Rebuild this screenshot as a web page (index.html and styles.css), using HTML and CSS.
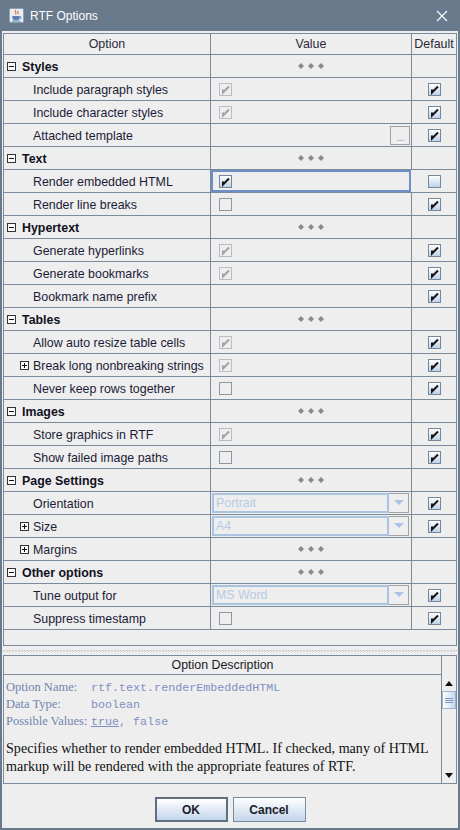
FILE: index.html
```html
<!DOCTYPE html>
<html>
<head>
<meta charset="utf-8">
<link rel="stylesheet" href="styles.css">
</head>
<body>
<div class="window">
  <div class="titlebar">
    <svg class="app-icon" width="15" height="15" viewBox="0 0 16 16">
      <rect x="0.5" y="0.5" width="15" height="15" rx="1.5" fill="#e9eef4" stroke="#8aa0b8"/>
      <path d="M7 2 C5 4 9 5 7 7 M9.5 3 C8 4.5 11 5 9.5 6.5" fill="none" stroke="#e0702a" stroke-width="1.2"/>
      <path d="M3.5 8.5 H11.5 V10.5 C11.5 12 10 13 8.5 13 H6.5 C5 13 3.5 12 3.5 10.5 Z" fill="#5a7fb0"/>
      <path d="M11.5 9 C13.5 9 13.5 11.5 11.5 11.5" fill="none" stroke="#5a7fb0" stroke-width="1"/>
      <path d="M3 14 H12.5" stroke="#5a7fb0" stroke-width="1"/>
    </svg>
    <span class="title">RTF Options</span>
    <svg class="close" width="12" height="12" viewBox="0 0 12 12">
      <path d="M1 1 L11 11 M11 1 L1 11" stroke="#ffffff" stroke-width="1.2" fill="none"/>
    </svg>
  </div>
  <div class="content">
    <div class="table-pane">
      <div class="row header">
        <div class="cell center">Option</div>
        <div class="cell center">Value</div>
        <div class="cell center">Default</div>
      </div>

      <div class="row group">
        <div class="cell opt"><span class="tog minus"></span><b>Styles</b></div>
        <div class="cell center"><span class="dots"><i></i><i></i><i></i></span></div>
        <div class="cell"></div>
      </div>
      <div class="row">
        <div class="cell opt child">Include paragraph styles</div>
        <div class="cell val"><span class="cb dis"><svg viewBox="0 0 11 11"><path d="M3 5.5 V8.5 L9 2.5"/></svg></span></div>
        <div class="cell center"><span class="cb"><svg viewBox="0 0 11 11"><path d="M3 5.5 V8.5 L9 2.5"/></svg></span></div>
      </div>
      <div class="row">
        <div class="cell opt child">Include character styles</div>
        <div class="cell val"><span class="cb dis"><svg viewBox="0 0 11 11"><path d="M3 5.5 V8.5 L9 2.5"/></svg></span></div>
        <div class="cell center"><span class="cb"><svg viewBox="0 0 11 11"><path d="M3 5.5 V8.5 L9 2.5"/></svg></span></div>
      </div>
      <div class="row">
        <div class="cell opt child">Attached template</div>
        <div class="cell val end"><span class="browse">...</span></div>
        <div class="cell center"><span class="cb"><svg viewBox="0 0 11 11"><path d="M3 5.5 V8.5 L9 2.5"/></svg></span></div>
      </div>

      <div class="row group">
        <div class="cell opt"><span class="tog minus"></span><b>Text</b></div>
        <div class="cell center"><span class="dots"><i></i><i></i><i></i></span></div>
        <div class="cell"></div>
      </div>
      <div class="row">
        <div class="cell opt child">Render embedded HTML</div>
        <div class="cell val focus"><span class="cb"><svg viewBox="0 0 11 11"><path d="M3 5.5 V8.5 L9 2.5"/></svg></span></div>
        <div class="cell center"><span class="cb"></span></div>
      </div>
      <div class="row">
        <div class="cell opt child">Render line breaks</div>
        <div class="cell val"><span class="cb plain"></span></div>
        <div class="cell center"><span class="cb"><svg viewBox="0 0 11 11"><path d="M3 5.5 V8.5 L9 2.5"/></svg></span></div>
      </div>

      <div class="row group">
        <div class="cell opt"><span class="tog minus"></span><b>Hypertext</b></div>
        <div class="cell center"><span class="dots"><i></i><i></i><i></i></span></div>
        <div class="cell"></div>
      </div>
      <div class="row">
        <div class="cell opt child">Generate hyperlinks</div>
        <div class="cell val"><span class="cb dis"><svg viewBox="0 0 11 11"><path d="M3 5.5 V8.5 L9 2.5"/></svg></span></div>
        <div class="cell center"><span class="cb"><svg viewBox="0 0 11 11"><path d="M3 5.5 V8.5 L9 2.5"/></svg></span></div>
      </div>
      <div class="row">
        <div class="cell opt child">Generate bookmarks</div>
        <div class="cell val"><span class="cb dis"><svg viewBox="0 0 11 11"><path d="M3 5.5 V8.5 L9 2.5"/></svg></span></div>
        <div class="cell center"><span class="cb"><svg viewBox="0 0 11 11"><path d="M3 5.5 V8.5 L9 2.5"/></svg></span></div>
      </div>
      <div class="row">
        <div class="cell opt child">Bookmark name prefix</div>
        <div class="cell val"></div>
        <div class="cell center"><span class="cb"><svg viewBox="0 0 11 11"><path d="M3 5.5 V8.5 L9 2.5"/></svg></span></div>
      </div>

      <div class="row group">
        <div class="cell opt"><span class="tog minus"></span><b>Tables</b></div>
        <div class="cell center"><span class="dots"><i></i><i></i><i></i></span></div>
        <div class="cell"></div>
      </div>
      <div class="row">
        <div class="cell opt child">Allow auto resize table cells</div>
        <div class="cell val"><span class="cb dis"><svg viewBox="0 0 11 11"><path d="M3 5.5 V8.5 L9 2.5"/></svg></span></div>
        <div class="cell center"><span class="cb"><svg viewBox="0 0 11 11"><path d="M3 5.5 V8.5 L9 2.5"/></svg></span></div>
      </div>
      <div class="row">
        <div class="cell opt sub"><span class="tog plus"></span>Break long nonbreaking strings</div>
        <div class="cell val"><span class="cb dis"><svg viewBox="0 0 11 11"><path d="M3 5.5 V8.5 L9 2.5"/></svg></span></div>
        <div class="cell center"><span class="cb"><svg viewBox="0 0 11 11"><path d="M3 5.5 V8.5 L9 2.5"/></svg></span></div>
      </div>
      <div class="row">
        <div class="cell opt child">Never keep rows together</div>
        <div class="cell val"><span class="cb plain"></span></div>
        <div class="cell center"><span class="cb"><svg viewBox="0 0 11 11"><path d="M3 5.5 V8.5 L9 2.5"/></svg></span></div>
      </div>

      <div class="row group">
        <div class="cell opt"><span class="tog minus"></span><b>Images</b></div>
        <div class="cell center"><span class="dots"><i></i><i></i><i></i></span></div>
        <div class="cell"></div>
      </div>
      <div class="row">
        <div class="cell opt child">Store graphics in RTF</div>
        <div class="cell val"><span class="cb dis"><svg viewBox="0 0 11 11"><path d="M3 5.5 V8.5 L9 2.5"/></svg></span></div>
        <div class="cell center"><span class="cb"><svg viewBox="0 0 11 11"><path d="M3 5.5 V8.5 L9 2.5"/></svg></span></div>
      </div>
      <div class="row">
        <div class="cell opt child">Show failed image paths</div>
        <div class="cell val"><span class="cb plain"></span></div>
        <div class="cell center"><span class="cb"><svg viewBox="0 0 11 11"><path d="M3 5.5 V8.5 L9 2.5"/></svg></span></div>
      </div>

      <div class="row group">
        <div class="cell opt"><span class="tog minus"></span><b>Page Settings</b></div>
        <div class="cell center"><span class="dots"><i></i><i></i><i></i></span></div>
        <div class="cell"></div>
      </div>
      <div class="row">
        <div class="cell opt child">Orientation</div>
        <div class="cell combo-cell"><div class="combo"><span class="combo-text">Portrait</span><span class="combo-btn"><svg width="10" height="6" viewBox="0 0 10 6"><path d="M0 0 H10 L5 5 Z" fill="#a9c4e2"/></svg></span></div></div>
        <div class="cell center"><span class="cb"><svg viewBox="0 0 11 11"><path d="M3 5.5 V8.5 L9 2.5"/></svg></span></div>
      </div>
      <div class="row">
        <div class="cell opt sub"><span class="tog plus"></span>Size</div>
        <div class="cell combo-cell"><div class="combo"><span class="combo-text">A4</span><span class="combo-btn"><svg width="10" height="6" viewBox="0 0 10 6"><path d="M0 0 H10 L5 5 Z" fill="#a9c4e2"/></svg></span></div></div>
        <div class="cell center"><span class="cb"><svg viewBox="0 0 11 11"><path d="M3 5.5 V8.5 L9 2.5"/></svg></span></div>
      </div>
      <div class="row">
        <div class="cell opt sub"><span class="tog plus"></span>Margins</div>
        <div class="cell center"><span class="dots"><i></i><i></i><i></i></span></div>
        <div class="cell"></div>
      </div>

      <div class="row group">
        <div class="cell opt"><span class="tog minus"></span><b>Other options</b></div>
        <div class="cell center"><span class="dots"><i></i><i></i><i></i></span></div>
        <div class="cell"></div>
      </div>
      <div class="row">
        <div class="cell opt child">Tune output for</div>
        <div class="cell combo-cell"><div class="combo"><span class="combo-text">MS Word</span><span class="combo-btn"><svg width="10" height="6" viewBox="0 0 10 6"><path d="M0 0 H10 L5 5 Z" fill="#a9c4e2"/></svg></span></div></div>
        <div class="cell center"><span class="cb"><svg viewBox="0 0 11 11"><path d="M3 5.5 V8.5 L9 2.5"/></svg></span></div>
      </div>
      <div class="row">
        <div class="cell opt child">Suppress timestamp</div>
        <div class="cell val"><span class="cb plain"></span></div>
        <div class="cell center"><span class="cb"><svg viewBox="0 0 11 11"><path d="M3 5.5 V8.5 L9 2.5"/></svg></span></div>
      </div>
    </div>

    <div class="splitter"><div class="grip"></div></div>

    <div class="desc-pane">
      <div class="desc-main">
        <div class="desc-header">Option Description</div>
        <div class="desc-body">
          <div class="props">
            <span class="lbl">Option Name:</span><span class="v">rtf.text.renderEmbeddedHTML</span>
            <span class="lbl">Data Type:</span><span class="v">boolean</span>
            <span class="lbl">Possible Values:</span><span class="v"><u>true</u>, false</span>
          </div>
          <p class="para">Specifies whether to render embedded HTML. If checked, many of HTML markup will be rendered with the appropriate features of RTF.</p>
        </div>
      </div>
      <div class="scrollbar">
        <div class="sb-corner"></div>
        <div class="sb-btn"><svg width="8" height="5" viewBox="0 0 8 5"><path d="M0 5 H8 L4 0 Z" fill="#111"/></svg></div>
        <div class="sb-track"><div class="sb-thumb"><span></span><span></span><span></span></div></div>
        <div class="sb-btn"><svg width="8" height="5" viewBox="0 0 8 5"><path d="M0 0 H8 L4 5 Z" fill="#111"/></svg></div>
      </div>
    </div>

    <div class="buttons">
      <button class="btn default">OK</button>
      <button class="btn">Cancel</button>
    </div>
  </div>
</div>
</body>
</html>
```
FILE: styles.css
```css
html, body {
  margin: 0;
  padding: 0;
}
body {
  width: 460px;
  height: 830px;
  font-family: "Liberation Sans", Arial, sans-serif;
  font-size: 12.4px;
  color: #1c1c38;
}
.window {
  width: 460px;
  height: 830px;
  box-sizing: border-box;
  background: #687a8c;
  padding: 0 2px 2px 2px;
  display: flex;
  flex-direction: column;
}
.titlebar {
  height: 31px;
  flex: none;
  display: flex;
  align-items: center;
  padding-left: 7px;
  padding-right: 8px;
}
.app-icon {
  flex: none;
}
.title {
  color: #ffffff;
  font-family: "Liberation Sans", Arial, sans-serif;
  font-size: 12px;
  margin-left: 6px;
  flex: 1;
}
.close {
  flex: none;
  margin-right: 2px;
}
.content {
  flex: 1;
  background: #eeeeee;
  padding: 2px 1px 0 1px;
  display: flex;
  flex-direction: column;
}
.table-pane {
  height: 613px;
  flex: none;
  box-sizing: border-box;
  border: 1px solid #7b8b9b;
}
.row {
  display: grid;
  grid-template-columns: 207px 201px 44px;
  height: 23px;
  box-sizing: border-box;
  border-bottom: 1px solid #7b8b9b;
}
.row.header {
  height: 21px;
}
.cell {
  box-sizing: border-box;
  border-right: 1px solid #7b8b9b;
  display: flex;
  align-items: center;
  white-space: nowrap;
  overflow: hidden;
}
.cell:last-child {
  border-right: none;
}
.header .cell {
  color: #2a2a3a;
}
.center {
  justify-content: center;
}
.opt {
  padding-left: 3px;
  padding-top: 1px;
}
.opt b {
  font-weight: bold;
  color: #111122;
}
.child {
  padding-left: 29px;
}
.sub {
  padding-left: 16px;
}
.tog {
  width: 9px;
  height: 9px;
  box-sizing: border-box;
  border: 1px solid #333;
  position: relative;
  margin-right: 5px;
  flex: none;
  background: #fbfbfb;
}
.opt.sub .tog {
  margin-right: 4px;
}
.tog::before {
  content: "";
  position: absolute;
  left: 1px;
  top: 3px;
  width: 5px;
  height: 1px;
  background: #111;
}
.tog.plus::after {
  content: "";
  position: absolute;
  left: 3px;
  top: 1px;
  width: 1px;
  height: 5px;
  background: #111;
}
.group .tog {
  margin-right: 6px;
}
.dots {
  display: flex;
  gap: 4px;
}
.dots i {
  width: 6px;
  height: 6px;
  background: #8a8a8a;
  clip-path: polygon(50% 0, 100% 50%, 50% 100%, 0 50%);
}
.val {
  padding-left: 8px;
}
.val.end {
  justify-content: flex-end;
  padding-right: 1px;
}
.val.focus {
  border: 2px solid #6e8ec6;
  border-right-width: 2px;
  padding-left: 6px;
  margin-right: 1px;
}
.row .cell.val.focus {
  border-right: 2px solid #6e8ec6;
}
.cb {
  width: 13px;
  height: 13px;
  box-sizing: border-box;
  border: 1px solid #75879a;
  background: linear-gradient(#ffffff, #bdd1e8);
  display: inline-flex;
  align-items: center;
  justify-content: center;
  flex: none;
}
.cb svg {
  width: 11px;
  height: 11px;
}
.cb svg path {
  fill: none;
  stroke: #161616;
  stroke-width: 2;
}
.cb.dis {
  border-color: #b9bec4;
  background: #eeeeee;
}
.cb.dis svg path {
  stroke: #a2a2a2;
}
.cb.plain {
  border-color: #8b97a3;
  background: #eeeeee;
}
.browse {
  width: 20px;
  height: 19px;
  box-sizing: border-box;
  border: 1px solid #a2a2a2;
  background: #eeeeee;
  display: flex;
  align-items: flex-end;
  justify-content: center;
  font-size: 10px;
  line-height: 12px;
  color: #8a8a9a;
  letter-spacing: -0.5px;
}
.combo-cell {
  padding: 0 1px 0 1px;
}
.combo {
  display: flex;
  width: 197px;
  height: 20px;
  box-sizing: border-box;
}
.combo-text {
  flex: 1;
  box-sizing: border-box;
  border: 2px solid #aac4e0;
  color: #b6cbe3;
  padding-left: 2px;
  display: flex;
  align-items: center;
  font-size: 12.4px;
}
.combo-btn {
  width: 20px;
  box-sizing: border-box;
  border: 1px solid #a2a2a2;
  border-left: none;
  display: flex;
  align-items: center;
  justify-content: center;
}
.splitter {
  height: 9px;
  flex: none;
  display: flex;
  align-items: center;
}
.grip {
  width: 100%;
  height: 2px;
  background-image:
    repeating-linear-gradient(90deg, #b4b4b4 0 1px, transparent 1px 3px),
    repeating-linear-gradient(90deg, transparent 0 1px, #c4c4c4 1px 2px, transparent 2px 3px);
  background-size: 100% 1px, 100% 1px;
  background-position: 0 0, 0 1px;
  background-repeat: no-repeat;
}
.desc-pane {
  height: 129px;
  flex: none;
  box-sizing: border-box;
  border: 1px solid #7b8b9b;
  display: flex;
}
.desc-main {
  flex: 1;
  display: flex;
  flex-direction: column;
  border-right: 1px solid #7b8b9b;
}
.desc-header {
  height: 19px;
  box-sizing: border-box;
  border-bottom: 1px solid #7b8b9b;
  display: flex;
  align-items: center;
  justify-content: center;
  color: #1c1c28;
  font-size: 12.4px;
}
.desc-body {
  padding: 4px 2px 0 2px;
}
.props {
  display: grid;
  grid-template-columns: 85px auto;
  grid-auto-rows: 17px;
  align-items: center;
}
.lbl {
  font-family: "Liberation Serif", "Times New Roman", serif;
  font-size: 12.5px;
  color: #7184ae;
}
.v {
  font-family: "Liberation Mono", "Courier New", monospace;
  font-size: 11.7px;
  color: #7f8fc4;
}
.para {
  margin: 9px 0 0 0;
  font-family: "Liberation Serif", "Times New Roman", serif;
  font-size: 14.1px;
  line-height: 18px;
  color: #111111;
}
.scrollbar {
  width: 14px;
  flex: none;
  display: flex;
  flex-direction: column;
}
.sb-corner {
  height: 19px;
  flex: none;
}
.sb-btn {
  height: 16px;
  flex: none;
  display: flex;
  align-items: center;
  justify-content: center;
}
.sb-track {
  flex: 1;
}
.sb-thumb {
  height: 18px;
  box-sizing: border-box;
  border: 1px solid #9fb4cc;
  background: linear-gradient(90deg, #ffffff, #c5d7ec);
  display: flex;
  flex-direction: column;
  justify-content: center;
  align-items: center;
  gap: 1px;
}
.sb-thumb span {
  width: 8px;
  height: 1px;
  background: #7b96bf;
}
.buttons {
  flex: 1;
  display: flex;
  justify-content: center;
  align-items: flex-start;
  padding-top: 13px;
  gap: 5px;
}
.btn {
  height: 25px;
  box-sizing: border-box;
  border: 1px solid #7b8b9b;
  background: linear-gradient(#ffffff, #c3d5ea);
  font-family: "Liberation Sans", Arial, sans-serif;
  font-size: 12px;
  font-weight: bold;
  color: #1c1c2c;
  padding: 0;
  width: 73px;
}
.btn.default {
  border: 2px solid #5f6f80;
}
```
